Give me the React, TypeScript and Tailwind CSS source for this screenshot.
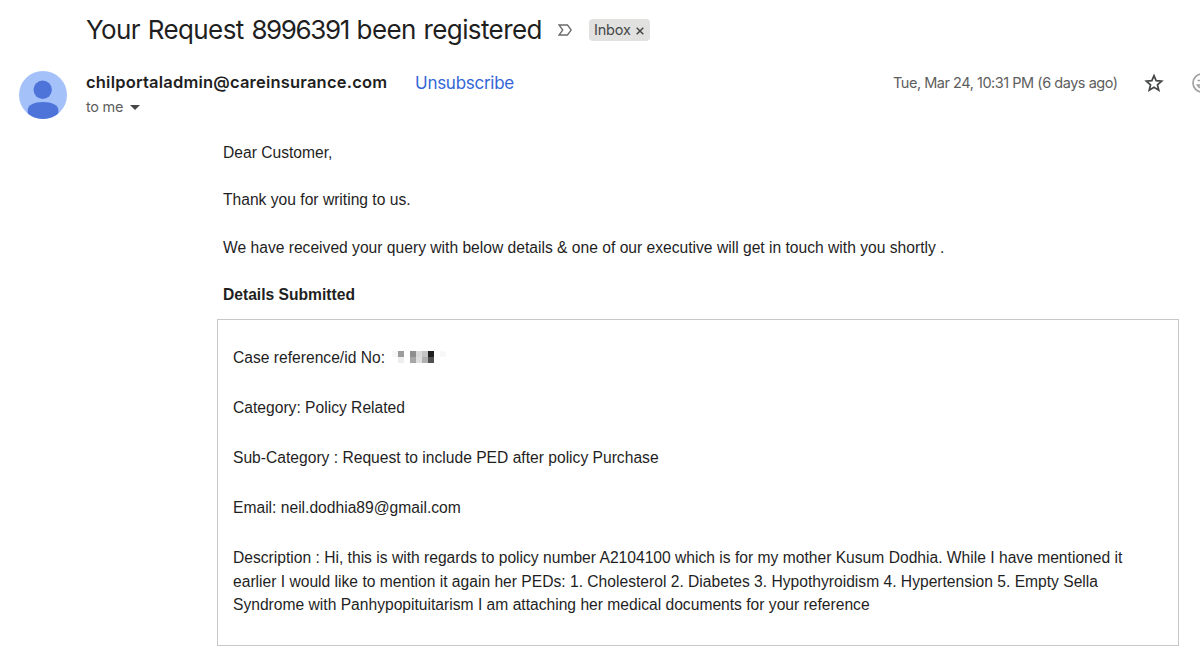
// Redacted case id, two rows of blurred-out cells
const mosaic = [
  "bg-[#f7f7f7]", "bg-[#9c9c9c]", "bg-white", "bg-[#8f8f8f]", "bg-[#d9d9d9]", "bg-[#c4c4c4]", "bg-[#202020]", "bg-white", "bg-[#f8f8f8]",
  "bg-white", "bg-[#ededed]", "bg-white", "bg-[#a6a6a6]", "bg-[#dedede]", "bg-[#b0b0b0]", "bg-[#505050]", "bg-white", "bg-white",
];

const Avatar = () => (
  <svg viewBox="0 0 48 48" className="h-12 w-12 shrink-0">
    <clipPath id="avatar-circle">
      <circle cx="24" cy="24" r="24" />
    </clipPath>
    <g clipPath="url(#avatar-circle)">
      <rect width="48" height="48" fill="#a5c1fa" />
      <circle cx="23.7" cy="18.7" r="9.2" fill="#4e74d9" />
      <path d="M8.7 48V39C8.7 34 15 31 24 31s15.300 3 15.300 8v9z" fill="#4e74d9" />
    </g>
  </svg>
);

const Subject = () => (
  <div className="flex h-[60px] items-center pl-[86px]">
    <h1 className="w-[455px] shrink-0 whitespace-nowrap text-[26px] leading-8 tracking-[-0.6px] [word-spacing:1px] text-[#1f1f1f]">
      Your Request <span className="tracking-[-1.4px]">8996391</span> been registered
    </h1>
    <svg viewBox="0 0 14 12" className="ml-[17px] h-3 w-[14px] shrink-0" fill="none" stroke="#6b6b6b" strokeWidth="1.3">
      <path d="M1 1h8.500l3.700 5-3.700 5H1l3.800-5z" />
    </svg>
    <div className="ml-[17px] flex h-[22px] w-[61px] shrink-0 items-center rounded bg-[#e1e1e0] pl-[5px] text-[14.5px] tracking-[-0.2px] text-[#444746]">
      <span className="w-[36px] whitespace-nowrap">Inbox</span>
      <svg viewBox="0 0 8 8" className="ml-[6px] mt-0.5 h-2 w-2" stroke="#444746" strokeWidth="1.5">
        <path d="M.7.7l6.600 6.600M7.300.7L.7 7.300" />
      </svg>
    </div>
  </div>
);

const Sender = () => (
  <div className="flex h-[70px] overflow-hidden pl-[19px] pt-[11px]">
    <Avatar />
    <div className="ml-[19px] w-[301px] shrink-0">
      <div className="h-6 whitespace-nowrap text-[16.5px] font-semibold leading-[23px] tracking-[0.2px] text-[#1f1f1f]">
        chilportaladmin@careinsurance.com
      </div>
      <div className="flex items-center text-[14.5px] leading-6 tracking-[-0.3px] text-[#5e5e5e]">
        <span className="w-[44px] whitespace-nowrap">to me</span>
        <svg viewBox="0 0 10 5" className="h-[5px] w-[10px]" fill="#444746">
          <path d="M0 0h10L5 5z" />
        </svg>
      </div>
    </div>
    <a className="ml-[28px] w-[99px] shrink-0 whitespace-nowrap text-[17px] leading-6 tracking-[-0.27px] text-[#3367d6]">
      Unsubscribe
    </a>
    <div className="ml-[379px] w-[226px] shrink-0 whitespace-nowrap text-[14.5px] leading-6 tracking-[-0.47px] text-[#5e5e5e]">
      Tue, Mar 24, 10:31 PM (6 days ago)
    </div>
    <svg viewBox="0 0 20 20" className="ml-[25px] mt-[2px] h-5 w-5 shrink-0" fill="none" stroke="#444746" strokeWidth="1.7">
      <path d="M10 2.600l2.150 5.100 5.500.5-4.200 3.600 1.300 5.400L10 14.300l-4.750 2.900 1.300-5.400-4.200-3.600 5.500-.5z" />
    </svg>
    <svg viewBox="0 0 20 20" className="ml-[28px] mt-[2px] h-5 w-5 shrink-0" fill="none" stroke="#a0a0a0" strokeWidth="1.7">
      <circle cx="10" cy="10" r="9" />
      <path d="M5.500 7.500h3M5.500 12c1 2 2.500 3 4.500 3s3.500-1 4.500-3z" />
    </svg>
  </div>
);

const App = () => {
  return (
    <main className="h-[654px] w-[1200px] overflow-hidden bg-white font-['Inter',sans-serif]">
      <Subject />
      <Sender />

      <div className="h-[189px] pl-[223px] pt-[10.5px] font-['Liberation_Sans',Arial,sans-serif] text-[15.64px] leading-[23.75px] text-[#1f1f1f]">
        <p className="mb-[23.75px]">Dear Customer,</p>
        <p className="mb-[23.75px]">Thank you for writing to us.</p>
        <p className="mb-[23.75px]">
          We have received your query with below details &amp; one of our executive will get in touch with you shortly .
        </p>
        <p className="font-bold">Details Submitted</p>
      </div>

      <section className="ml-[217px] flex h-[327px] w-[962px] flex-col gap-[26.5px] border border-[#c8c8c8] pl-[15px] pt-[26px] font-['Liberation_Sans',Arial,sans-serif] text-[15.64px] leading-[23.5px] text-[#1f1f1f]">
        <div className="flex items-center">
          <span className="w-[158.5px]">Case reference/id No:</span>
          <div className="-mt-px grid grid-cols-[repeat(9,6px)] grid-rows-[6px_6px]">
            {mosaic.map((cell, i) => (
              <div key={i} className={cell} />
            ))}
          </div>
        </div>
        <p>Category: Policy Related</p>
        <p>Sub-Category : Request to include PED after policy Purchase</p>
        <p>Email: neil.dodhia89@gmail.com</p>
        <p className="whitespace-nowrap">
          Description : Hi, this is with regards to policy number A2104100 which is for my mother Kusum Dodhia. While I have mentioned it
          <br />
          earlier I would like to mention it again her PEDs: 1. Cholesterol 2. Diabetes 3. Hypothyroidism 4. Hypertension 5. Empty Sella
          <br />
          Syndrome with Panhypopituitarism I am attaching her medical documents for your reference
        </p>
      </section>
    </main>
  );
};

export default App;
